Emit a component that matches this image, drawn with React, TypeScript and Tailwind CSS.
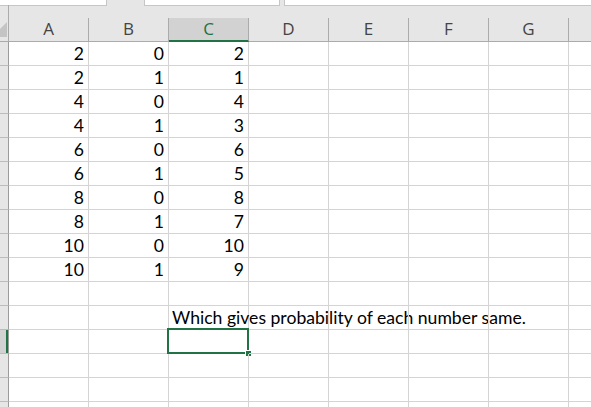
import React from 'react'

// Worksheet view: column headers, a narrow row-header strip and a 16-row grid.
const COLS = ['A', 'B', 'C', 'D', 'E', 'F', 'G', '']

const DATA: (string | number)[][] = [
  [2, 0, 2],
  [2, 1, 1],
  [4, 0, 4],
  [4, 1, 3],
  [6, 0, 6],
  [6, 1, 5],
  [8, 0, 8],
  [8, 1, 7],
  [10, 0, 10],
  [10, 1, 9],
]

const ROW_COUNT = 16
const NOTE_ROW = 11
const ACTIVE_ROW = 12

const cellFont = { fontFamily: 'Lato, "Open Sans", sans-serif' }

function ColumnHeader() {
  return (
    <div className="flex h-[37px] bg-[#e6e6e6]">
      <div className="relative w-[9px] shrink-0 border-b border-r border-[#ababab]">
        <svg className="absolute left-0 top-[17px]" width="8" height="16" viewBox="0 0 8 16">
          <polygon points="7,0 7,15 0,15 0,7" fill="#c4c4c4" />
        </svg>
      </div>
      {COLS.map((c, i) => {
        const active = c === 'C'
        return (
          <div
            key={i}
            className={`mt-[13px] flex shrink-0 items-center justify-center pb-px text-[17px] ${
              i < COLS.length - 1 ? 'w-[80px] border-r' : 'flex-1'
            } ${
              active
                ? 'border-b-2 border-b-[#217346] border-r-[#ababab] bg-[#d2d2d2] text-[#217346]'
                : 'border-b border-[#ababab] text-[#444]'
            }`}
            style={{ fontFamily: '"Open Sans", "Noto Sans", sans-serif' }}
          >
            {c}
          </div>
        )
      })}
    </div>
  )
}

function Row({ r }: { r: number }) {
  const values = DATA[r] ?? []
  const active = r === ACTIVE_ROW
  return (
    <div className="flex h-[24px]">
      <div
        className={`w-[9px] shrink-0 border-b border-r border-b-[#bcbcbc] border-r-[#9b9b9b] ${
          active ? 'bg-[#d2d2d2] shadow-[inset_-2px_0_0_#217346]' : 'bg-[#e6e6e6]'
        }`}
      />
      {COLS.map((_, i) => (
        <div
          key={i}
          className={`relative flex shrink-0 items-end border-b border-[#d4d4d4] pb-px text-[17.6px] leading-[20px] text-black ${
            i < COLS.length - 1 ? 'w-[80px] border-r justify-end pr-[4px]' : 'flex-1'
          }`}
          style={cellFont}
        >
          {values[i] !== undefined ? values[i] : null}
          {r === NOTE_ROW && i === 2 ? (
            <span className="absolute bottom-px left-[3px] whitespace-nowrap">
              Which gives probability of each number same.
            </span>
          ) : null}
          {active && i === 2 ? (
            <div className="pointer-events-none absolute -left-[2px] -top-[2px] h-[26px] w-[82px] border-2 border-[#217346]">
              <div className="absolute -bottom-[5px] -right-[5px] h-[7px] w-[7px] border border-white bg-[#217346]" />
            </div>
          ) : null}
        </div>
      ))}
    </div>
  )
}

export default function App() {
  return (
    <div className="h-[407px] w-[591px] overflow-hidden bg-white">
      <div className="flex h-[6px] bg-[#e6e6e6]">
        <div className="h-[6px] w-[107px] border-b border-r border-[#c6c6c6] bg-white" />
        <div className="w-[37px]" />
        <div className="h-[6px] w-[136px] border-x border-b border-[#c6c6c6] bg-white" />
        <div className="w-[4px]" />
        <div className="h-[6px] flex-1 border-b border-l border-[#c6c6c6] bg-white" />
      </div>
      <div className="-mt-px">
        <ColumnHeader />
      </div>
      {Array.from({ length: ROW_COUNT }, (_, r) => (
        <Row key={r} r={r} />
      ))}
    </div>
  )
}
